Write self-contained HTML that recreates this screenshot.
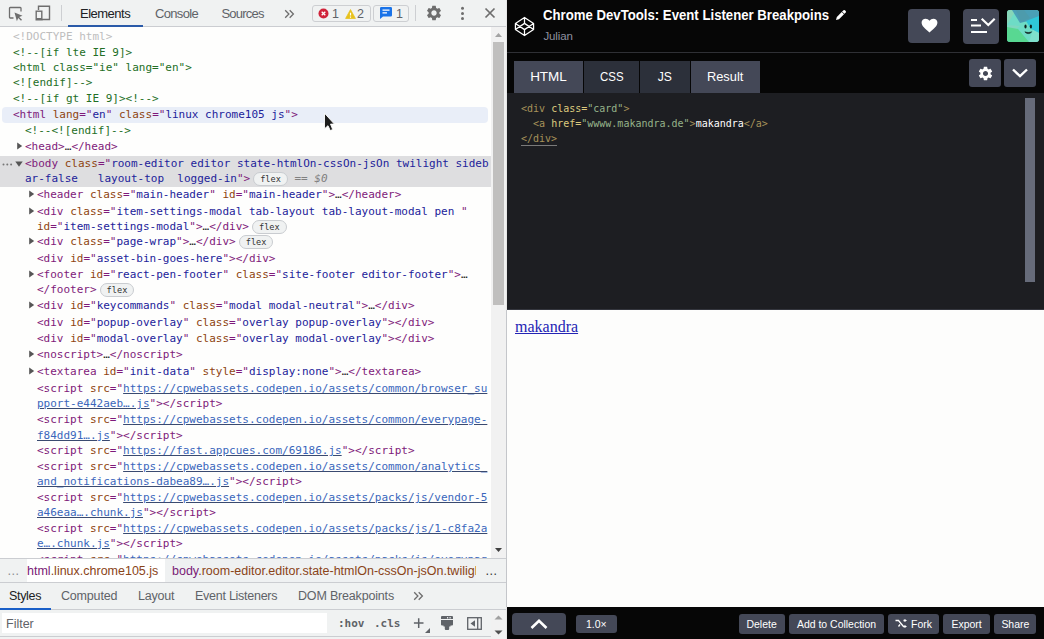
<!DOCTYPE html>
<html lang="en">
<head>
<meta charset="utf-8">
<title>Chrome DevTools: Event Listener Breakpoins</title>
<style>
*{box-sizing:border-box;margin:0;padding:0}
html,body{width:1044px;height:639px;overflow:hidden;background:#fff}
body{position:relative;font-family:"Liberation Sans",sans-serif}
.abs{position:absolute}
/* ---------- DevTools ---------- */
#dt{position:absolute;left:0;top:0;width:506px;height:639px;background:#fff;overflow:hidden;font-size:12px;color:#333}
#tb{position:absolute;left:0;top:0;width:506px;height:27px;background:#f0f2f2;border-bottom:1px solid #cbcdd1}
.tab{position:absolute;top:6px;font-size:13px;letter-spacing:-0.4px;line-height:15px;color:#5f6368;white-space:nowrap}
.tab.on{color:#202124}
#dom{position:absolute;left:0;top:27px;width:491px;height:531px;overflow:hidden;background:#fefefd}
#domin{position:absolute;left:0;top:-27px;width:491px;height:600px}
.ln{position:absolute;height:16px;line-height:16px;font-family:"DejaVu Sans Mono","Liberation Mono",monospace;font-size:11px;white-space:pre;color:#222}
.t{color:#7e1a7a}.an{color:#8e4410}.av{color:#22229a}.c{color:#236e25}.dt{color:#bdbdbd}
.lk{color:#3a66bc;text-decoration:underline;text-decoration-color:#3a4a70}
.el{color:#222}
.eq{color:#808080;font-style:italic}
.fx{display:inline-block;vertical-align:top;margin-top:1px;height:14px;line-height:12px;font-size:8.6px;border:1px solid #c9ccd0;border-radius:7px;padding:0 6px;margin-left:3px;color:#333;background:#f0f2f2;font-family:"DejaVu Sans Mono",monospace}
.ar{position:absolute;top:3px;left:-8px;width:6px;height:8px;fill:#555}
.ad{position:absolute;top:5px;left:-10px;width:8px;height:6px;fill:#555}
#sb{position:absolute;left:491px;top:27px;width:15px;height:531px;background:#f1f1f1}
#sbth{position:absolute;left:2px;top:15px;width:11px;height:263px;background:#c0bfbe}
#bc{position:absolute;left:0;top:558px;width:506px;height:25px;background:#f0f2f2;border-top:1px solid #cbcdd1;border-bottom:1px solid #cbcdd1}
#st{position:absolute;left:0;top:583px;width:506px;height:27px;background:#f0f2f2;border-bottom:1px solid #cbcdd1}
#fl{position:absolute;left:0;top:610px;width:506px;height:29px;background:#f0f2f2}
/* ---------- CodePen ---------- */
#cp{position:absolute;left:507px;top:0;width:537px;height:639px;background:#060606;overflow:hidden;font-family:"Liberation Sans",sans-serif}

.ic{position:absolute}
.badge{position:absolute;top:5px;height:17px;border:1px solid #cdcfd2;border-radius:3px;background:#f0f2f2}
.bn{position:absolute;top:7px;font-size:12.5px;line-height:15px;color:#5f6368}
.crumb{position:absolute;top:0;height:23px;line-height:24px;font-size:12.5px;white-space:nowrap;color:#8a4418;overflow:hidden}
.crumb b{font-weight:normal;color:#7a1c76}
.stab{position:absolute;top:6px;font-size:12.5px;line-height:15px;color:#5f6368;white-space:nowrap}
.stab.on{color:#202124}
.mono{font-family:"DejaVu Sans Mono","Liberation Mono",monospace}
/* codepen */
#cph{position:absolute;left:0;top:0;width:537px;height:53px;border-bottom:1px solid #2f3035}
#title{position:absolute;left:36px;top:5px;font-size:14.5px;line-height:20px;font-weight:bold;color:#fff;white-space:nowrap;transform:scaleX(.909);transform-origin:0 0}
#author{position:absolute;left:36.500px;top:29px;font-size:11.5px;letter-spacing:-0.15px;line-height:15px;color:#8f91a0;white-space:nowrap}
.hb{position:absolute;background:#444857;border-radius:4px}
.etab{position:absolute;top:61px;height:32px;line-height:32px;text-align:center;color:#fff;font-size:13.5px;background:#2c303a}
.etab span{display:inline-block}
.etab.on{background:#444857}
#ed{position:absolute;left:0;top:93px;width:537px;height:217px;background:#1d1e22;border-bottom:1px solid #34363e}
.cl{position:absolute;left:14px;height:15px;line-height:15px;font-family:"DejaVu Sans Mono","Liberation Mono",monospace;font-size:10px;white-space:pre;color:#fff}
.ct{color:#a7925a}.ca{color:#ddca7e}.cs{color:#96b38a}
#res{position:absolute;left:0;top:310px;width:537px;height:297px;background:#fdfdfc;font-family:"Liberation Serif",serif}
#res a{position:absolute;left:8px;top:8px;font-size:16px;line-height:18px;color:#2424b4;text-decoration:underline}
#cpf{position:absolute;left:0;top:607px;width:537px;height:32px;background:#060606}
.fb span{display:inline-block;transform:scaleX(.91)}
.fb{position:absolute;top:7px;height:20px;line-height:20px;background:#444857;border-radius:3px;color:#fff;font-size:11.5px;text-align:center;white-space:nowrap}
</style>
</head>
<body>
<div id="dt">
  <div id="tb">
    <svg class="ic" style="left:8px;top:6px" width="16" height="16" viewBox="0 0 16 16"><path d="M13 5.5V2.2a.7.7 0 0 0-.7-.7H2.200a.7.7 0 0 0-.7.7v9.1a.7.7 0 0 0 .7.7H5.500" fill="none" stroke="#6e6e6e" stroke-width="1.3"/><path d="M6.500 6.500l8 3.200-3.300 1.300 2.800 2.800-1 1-2.800-2.800-1.300 3.300z" fill="#6e6e6e"/></svg>
    <svg class="ic" style="left:34px;top:4px" width="18" height="18" viewBox="0 0 18 18"><path d="M4.500 6V2.300h11v13.200H8" fill="none" stroke="#6e6e6e" stroke-width="1.4"/><rect x="2.200" y="7.200" width="5.600" height="8.600" fill="none" stroke="#6e6e6e" stroke-width="1.400"/><rect x="2.200" y="14" width="5.600" height="1.800" fill="#6e6e6e"/></svg>
    <div class="abs" style="left:61px;top:5px;width:1px;height:16px;background:#cdcfd2"></div>
    <span class="tab on" style="left:80px;letter-spacing:-0.5px">Elements</span>
    <div class="abs" style="left:68px;top:25px;width:75px;height:2px;background:#2a5aa8"></div>
    <span class="tab" style="left:155px;letter-spacing:-0.67px">Console</span>
    <span class="tab" style="left:221.500px;letter-spacing:-0.8px">Sources</span>
    <svg class="ic" style="left:284px;top:8.500px" width="11" height="10" viewBox="0 0 11 10"><path d="M1.200 1.200l3.700 3.800-3.700 3.800M5.700 1.200l3.700 3.800-3.700 3.800" fill="none" stroke="#6e6e6e" stroke-width="1.300"/></svg>
    <div class="badge" style="left:312px;width:59px"></div>
    <svg class="ic" style="left:318px;top:8px" width="11" height="11" viewBox="0 0 11 11"><circle cx="5.500" cy="5.500" r="5" fill="#d0233a"/><path d="M3.700 3.700l3.600 3.600M7.300 3.700L3.700 7.300" stroke="#fff" stroke-width="1.300"/></svg>
    <span class="bn" style="left:332px">1</span>
    <svg class="ic" style="left:344.500px;top:8.500px" width="11" height="10" viewBox="0 0 12 11"><path d="M6 .6L11.400 10.400H.6z" fill="#e8c21c" stroke="#e8c21c" stroke-width=".8" stroke-linejoin="round"/><path d="M6 4v3.200M6 8.300v1.200" stroke="#fff" stroke-width="1.300"/></svg>
    <span class="bn" style="left:357px">2</span>
    <div class="badge" style="left:373px;width:36px"></div>
    <svg class="ic" style="left:380px;top:7px" width="12" height="12" viewBox="0 0 12 12"><path d="M1.200 0h9.600A1.200 1.200 0 0 1 12 1.200v7.100a1.200 1.200 0 0 1-1.200 1.200H3L0 12V1.200A1.200 1.200 0 0 1 1.200 0z" fill="#1a73e8"/><path d="M2.500 3.200h7M2.500 5.800h4.500" stroke="#fff" stroke-width="1.200"/></svg>
    <span class="bn" style="left:396px">1</span>
    <div class="abs" style="left:415px;top:5px;width:1px;height:16px;background:#cdcfd2"></div>
    <svg class="ic" style="left:425px;top:4px" width="18" height="18" viewBox="0 0 24 24"><path fill="#6e6e6e" d="M19.140 12.940c.04-.3.060-.61.060-.940 0-.32-.020-.64-.070-.94l2.030-1.580c.18-.14.230-.41.120-.61l-1.920-3.320c-.12-.22-.37-.29-.59-.22l-2.390.96c-.5-.38-1.030-.7-1.620-.94l-.36-2.540c-.04-.24-.24-.41-.48-.41h-3.840c-.24 0-.43.170-.47.410l-.36 2.540c-.59.240-1.130.57-1.620.94l-2.390-.96c-.22-.08-.47 0-.59.220L2.740 8.870c-.12.210-.08.470.12.610l2.030 1.580c-.05.300-.09.630-.09.940s.02.640.07.940l-2.030 1.580c-.18.140-.23.410-.12.610l1.920 3.320c.12.220.37.290.59.220l2.390-.96c.5.380 1.030.7 1.620.94l.36 2.540c.05.240.24.410.48.410h3.840c.24 0 .44-.17.470-.41l.36-2.540c.59-.24 1.130-.56 1.620-.94l2.390.96c.22.080.47 0 .59-.22l1.920-3.320c.12-.22.070-.47-.12-.61l-2.010-1.580zM12 15.600c-1.980 0-3.600-1.620-3.600-3.600s1.620-3.600 3.600-3.600 3.600 1.620 3.600 3.600-1.620 3.600-3.600 3.600z"/></svg>
    <svg class="ic" style="left:460px;top:6px" width="5" height="15" viewBox="0 0 5 15"><circle cx="2.500" cy="2.300" r="1.500" fill="#6e6e6e"/><circle cx="2.500" cy="7.400" r="1.500" fill="#6e6e6e"/><circle cx="2.500" cy="12.500" r="1.500" fill="#6e6e6e"/></svg>
    <svg class="ic" style="left:484px;top:7px" width="12" height="12" viewBox="0 0 12 12"><path d="M1.500 1.500l9 9M10.500 1.500l-9 9" stroke="#6e6e6e" stroke-width="1.700"/></svg>
  </div>
  <div id="dom"><div id="domin">
    <div class="abs" style="left:2px;top:107px;width:486px;height:16px;background:#e9eef8;border-radius:4px"></div>
    <div class="abs" style="left:0;top:156px;width:491px;height:31px;background:#dedee0"></div>
<svg class="abs" style="left:2px;top:163px" width="11" height="3" viewBox="0 0 11 3"><circle cx="1.500" cy="1.500" r="1" fill="#777"/><circle cx="5.300" cy="1.500" r="1" fill="#777"/><circle cx="9.100" cy="1.500" r="1" fill="#777"/></svg>
<div class="ln" style="top:29px;left:13px"><span class="dt">&lt;!DOCTYPE html&gt;</span></div>
<div class="ln" style="top:45px;left:13px"><span class="c">&lt;!--[if lte IE 9]&gt;</span></div>
<div class="ln" style="top:60px;left:13px"><span class="c">&lt;html class=&quot;ie&quot; lang=&quot;en&quot;&gt;</span></div>
<div class="ln" style="top:75px;left:13px"><span class="c">&lt;![endif]--&gt;</span></div>
<div class="ln" style="top:91px;left:13px"><span class="c">&lt;!--[if gt IE 9]&gt;&lt;!--&gt;</span></div>
<div class="ln" style="top:107px;left:13px"><span class="t">&lt;html</span> <span class="an">lang</span><span class="t">=&quot;</span><span class="av">en</span><span class="t">&quot;</span> <span class="an">class</span><span class="t">=&quot;</span><span class="av">linux chrome105 js</span><span class="t">&quot;</span><span class="t">&gt;</span></div>
<div class="ln" style="top:123px;left:25px"><span class="c">&lt;!--&lt;![endif]--&gt;</span></div>
<div class="ln" style="top:139px;left:25px"><span class="t">&lt;head&gt;</span><span class="el">…</span><span class="t">&lt;/head&gt;</span><svg class="ar" viewBox="0 0 6 8"><path d="M.2.400L5.200 4 .2 7.600z"/></svg></div>
<div class="ln" style="top:156px;left:25px"><span class="t">&lt;body</span> <span class="an">class</span><span class="t">=&quot;</span><span class="av">room-editor editor state-htmlOn-cssOn-jsOn twilight sideb</span><svg class="ad" viewBox="0 0 8 6"><path d="M.3.400h7.400L4 5.800z"/></svg></div>
<div class="ln" style="top:171px;left:25px"><span class="av">ar-false   layout-top  logged-in</span><span class="t">&quot;&gt;</span><span class="fx">flex</span><span class="eq"> == $0</span></div>
<div class="ln" style="top:187px;left:37px"><span class="t">&lt;header</span> <span class="an">class</span><span class="t">=&quot;</span><span class="av">main-header</span><span class="t">&quot;</span> <span class="an">id</span><span class="t">=&quot;</span><span class="av">main-header</span><span class="t">&quot;</span><span class="t">&gt;</span><span class="el">…</span><span class="t">&lt;/header&gt;</span><svg class="ar" viewBox="0 0 6 8"><path d="M.2.400L5.200 4 .2 7.600z"/></svg></div>
<div class="ln" style="top:204px;left:37px"><span class="t">&lt;div</span> <span class="an">class</span><span class="t">=&quot;</span><span class="av">item-settings-modal tab-layout tab-layout-modal pen </span><span class="t">&quot;</span><svg class="ar" viewBox="0 0 6 8"><path d="M.2.400L5.200 4 .2 7.600z"/></svg></div>
<div class="ln" style="top:219px;left:37px"><span class="an">id</span><span class="t">=&quot;</span><span class="av">item-settings-modal</span><span class="t">&quot;&gt;</span><span class="el">…</span><span class="t">&lt;/div&gt;</span><span class="fx">flex</span></div>
<div class="ln" style="top:234px;left:37px"><span class="t">&lt;div</span> <span class="an">class</span><span class="t">=&quot;</span><span class="av">page-wrap</span><span class="t">&quot;</span><span class="t">&gt;</span><span class="el">…</span><span class="t">&lt;/div&gt;</span><span class="fx">flex</span><svg class="ar" viewBox="0 0 6 8"><path d="M.2.400L5.200 4 .2 7.600z"/></svg></div>
<div class="ln" style="top:251px;left:37px"><span class="t">&lt;div</span> <span class="an">id</span><span class="t">=&quot;</span><span class="av">asset-bin-goes-here</span><span class="t">&quot;</span><span class="t">&gt;&lt;/div&gt;</span></div>
<div class="ln" style="top:267px;left:37px"><span class="t">&lt;footer</span> <span class="an">id</span><span class="t">=&quot;</span><span class="av">react-pen-footer</span><span class="t">&quot;</span> <span class="an">class</span><span class="t">=&quot;</span><span class="av">site-footer editor-footer</span><span class="t">&quot;</span><span class="t">&gt;</span><span class="el">…</span><svg class="ar" viewBox="0 0 6 8"><path d="M.2.400L5.200 4 .2 7.600z"/></svg></div>
<div class="ln" style="top:282px;left:37px"><span class="t">&lt;/footer&gt;</span><span class="fx">flex</span></div>
<div class="ln" style="top:298px;left:37px"><span class="t">&lt;div</span> <span class="an">id</span><span class="t">=&quot;</span><span class="av">keycommands</span><span class="t">&quot;</span> <span class="an">class</span><span class="t">=&quot;</span><span class="av">modal modal-neutral</span><span class="t">&quot;</span><span class="t">&gt;</span><span class="el">…</span><span class="t">&lt;/div&gt;</span><svg class="ar" viewBox="0 0 6 8"><path d="M.2.400L5.200 4 .2 7.600z"/></svg></div>
<div class="ln" style="top:315px;left:37px"><span class="t">&lt;div</span> <span class="an">id</span><span class="t">=&quot;</span><span class="av">popup-overlay</span><span class="t">&quot;</span> <span class="an">class</span><span class="t">=&quot;</span><span class="av">overlay popup-overlay</span><span class="t">&quot;</span><span class="t">&gt;&lt;/div&gt;</span></div>
<div class="ln" style="top:331px;left:37px"><span class="t">&lt;div</span> <span class="an">id</span><span class="t">=&quot;</span><span class="av">modal-overlay</span><span class="t">&quot;</span> <span class="an">class</span><span class="t">=&quot;</span><span class="av">overlay modal-overlay</span><span class="t">&quot;</span><span class="t">&gt;&lt;/div&gt;</span></div>
<div class="ln" style="top:347px;left:37px"><span class="t">&lt;noscript&gt;</span><span class="el">…</span><span class="t">&lt;/noscript&gt;</span><svg class="ar" viewBox="0 0 6 8"><path d="M.2.400L5.200 4 .2 7.600z"/></svg></div>
<div class="ln" style="top:364px;left:37px"><span class="t">&lt;textarea</span> <span class="an">id</span><span class="t">=&quot;</span><span class="av">init-data</span><span class="t">&quot;</span> <span class="an">style</span><span class="t">=&quot;</span><span class="av">display:none</span><span class="t">&quot;</span><span class="t">&gt;</span><span class="el">…</span><span class="t">&lt;/textarea&gt;</span><svg class="ar" viewBox="0 0 6 8"><path d="M.2.400L5.200 4 .2 7.600z"/></svg></div>
<div class="ln" style="top:381px;left:37px"><span class="t">&lt;script</span> <span class="an">src</span><span class="t">=&quot;</span><span class="av lk">https://cpwebassets.codepen.io/assets/common/browser_su</span></div>
<div class="ln" style="top:396px;left:37px"><span class="av lk">pport-e442aeb….js</span><span class="t">&quot;&gt;&lt;/script&gt;</span></div>
<div class="ln" style="top:412px;left:37px"><span class="t">&lt;script</span> <span class="an">src</span><span class="t">=&quot;</span><span class="av lk">https://cpwebassets.codepen.io/assets/common/everypage-</span></div>
<div class="ln" style="top:428px;left:37px"><span class="av lk">f84dd91….js</span><span class="t">&quot;&gt;&lt;/script&gt;</span></div>
<div class="ln" style="top:443px;left:37px"><span class="t">&lt;script</span> <span class="an">src</span><span class="t">=&quot;</span><span class="av lk">https://fast.appcues.com/69186.js</span><span class="t">&quot;&gt;&lt;/script&gt;</span></div>
<div class="ln" style="top:459px;left:37px"><span class="t">&lt;script</span> <span class="an">src</span><span class="t">=&quot;</span><span class="av lk">https://cpwebassets.codepen.io/assets/common/analytics_</span></div>
<div class="ln" style="top:474px;left:37px"><span class="av lk">and_notifications-dabea89….js</span><span class="t">&quot;&gt;&lt;/script&gt;</span></div>
<div class="ln" style="top:490px;left:37px"><span class="t">&lt;script</span> <span class="an">src</span><span class="t">=&quot;</span><span class="av lk">https://cpwebassets.codepen.io/assets/packs/js/vendor-5</span></div>
<div class="ln" style="top:505px;left:37px"><span class="av lk">a46eaa….chunk.js</span><span class="t">&quot;&gt;&lt;/script&gt;</span></div>
<div class="ln" style="top:521px;left:37px"><span class="t">&lt;script</span> <span class="an">src</span><span class="t">=&quot;</span><span class="av lk">https://cpwebassets.codepen.io/assets/packs/js/1-c8fa2a</span></div>
<div class="ln" style="top:536px;left:37px"><span class="av lk">e….chunk.js</span><span class="t">&quot;&gt;&lt;/script&gt;</span></div>
<div class="ln" style="top:552px;left:37px"><span class="t">&lt;script</span> <span class="an">src</span><span class="t">=&quot;</span><span class="av lk">https://cpwebassets.codepen.io/assets/packs/js/everypag</span></div>
  </div></div>
  <div id="sb"><div id="sbth"></div><svg class="ic" style="left:4px;top:6px" width="7" height="4" viewBox="0 0 7 4"><path d="M0 4L3.500 0 7 4z" fill="#a3a3a3"/></svg><svg class="ic" style="left:4px;top:521px" width="7" height="4" viewBox="0 0 7 4"><path d="M0 0L3.500 4 7 0z" fill="#404040"/></svg></div>
  <div id="bc">
    <span class="crumb" style="left:7px;color:#8a8d91">…</span>
    <span class="crumb" style="left:27px;width:138px;background:#fff;padding-left:0"><b>html</b>.linux.chrome105.js</span>
    <span class="crumb" style="left:165px;width:310.500px;background:#eff1f2;padding-left:7px"><b>body</b>.room-editor.editor.state-htmlOn-cssOn-jsOn.twilight.sidebar-false</span>
    <span class="crumb" style="left:485px;color:#333">…</span>
  </div>
  <div id="st">
    <span class="stab on" style="left:9px;letter-spacing:-0.33px">Styles</span>
    <div class="abs" style="left:0;top:25px;width:51px;height:2px;background:#1a5fc8"></div>
    <span class="stab" style="left:61px;letter-spacing:-0.18px">Computed</span>
    <span class="stab" style="left:138px;letter-spacing:-0.2px">Layout</span>
    <span class="stab" style="left:195px;letter-spacing:-0.26px">Event Listeners</span>
    <span class="stab" style="left:298px;letter-spacing:-0.18px">DOM Breakpoints</span>
    <svg class="ic" style="left:413px;top:8px" width="11" height="10" viewBox="0 0 11 10"><path d="M1.200 1.200l3.700 3.800-3.700 3.800M5.700 1.200l3.700 3.800-3.700 3.800" fill="none" stroke="#6e6e6e" stroke-width="1.300"/></svg>
  </div>
  <div id="fl">
    <div class="abs" style="left:2px;top:3px;width:325px;height:20px;background:#fff"></div><div class="abs" style="left:0;top:26px;width:491px;height:1px;background:#cbcdd1"></div>
    <span class="abs" style="left:6px;top:7px;font-size:12.5px;line-height:15px;color:#5f6368">Filter</span>
    <span class="abs mono" style="left:338px;top:6px;font-size:11px;line-height:15px;font-weight:bold;color:#5f6368">:hov</span>
    <span class="abs mono" style="left:374px;top:6px;font-size:11px;line-height:15px;font-weight:bold;color:#5f6368">.cls</span>
    <svg class="ic" style="left:412px;top:6px" width="19" height="18" viewBox="0 0 19 18"><path d="M6.700 2.300v9.600M1.900 7.100h9.600" stroke="#5f6368" stroke-width="1.500"/><path d="M18 12v5h-5z" fill="#5f6368"/></svg>
    <svg class="ic" style="left:441px;top:6px" width="12" height="14" viewBox="0 0 12 14"><path d="M1 0h10a1 1 0 0 1 1 1v2H0V1a1 1 0 0 1 1-1zM0 4h12v4.500a1 1 0 0 1-1 1H1a1 1 0 0 1-1-1zM2.500 9.500h7v1h-7zM3.800 10.500h4.400v2.500a1 1 0 0 1-1 1H4.800a1 1 0 0 1-1-1z" fill="#5f6368"/><path d="M6 1h1.200v1.500H6zM8.500 1h1.200v1.500H8.500z" fill="#e8eaed"/></svg>
    <svg class="ic" style="left:467px;top:7px" width="15" height="13" viewBox="0 0 15 13"><rect x=".7" y=".7" width="13.600" height="11.600" fill="none" stroke="#5f6368" stroke-width="1.300"/><path d="M10.700 1v11" stroke="#5f6368" stroke-width="1.300"/><path d="M8 3.300v6.400L3.500 6.500z" fill="#5f6368"/></svg>
    <div class="abs" style="left:491px;top:0;width:15px;height:30px;background:#f1f1f1"></div>
    <svg class="ic" style="left:494px;top:4px" width="9" height="22" viewBox="0 0 9 22"><path d="M.5 5.500L4.500 1.500l4 4z" fill="#a0a0a0"/><path d="M.5 16.500l4 4 4-4z" fill="#505050"/></svg>
  </div>
</div>
<div class="abs" style="left:506px;top:0;width:1px;height:639px;background:#e6e6e6"></div><div class="abs" style="left:506px;top:310px;width:1px;height:297px;background:#c4c6ca"></div>
<div id="cp">
  <div id="cph">
    <svg class="ic" style="left:7.300px;top:15.900px" width="21" height="21" viewBox="0 0 22 22"><path d="M11 1.500L20.500 7.800v6.400L11 20.500 1.500 14.200V7.800zM11 1.500v6.200M11 14.300v6.200M1.500 7.800L11 14.300l9.500-6.500M1.500 14.200L11 7.700l9.500 6.500" fill="none" stroke="#fff" stroke-width="1.350" stroke-linejoin="round"/></svg>
    <span id="title">Chrome DevTools: Event Listener Breakpoins</span>
    <svg class="ic" style="left:328px;top:9px" width="12" height="12" viewBox="0 0 12 12"><path d="M1 11l.8-3L8.500 1.300a1 1 0 0 1 1.400 0l.8.800a1 1 0 0 1 0 1.400L4 10.200z" fill="#fff"/><path d="M7 2.800L9.200 5" stroke="#060606" stroke-width=".8"/></svg>
    <span id="author">Julian</span>
    <div class="hb" style="left:401px;top:9px;width:42px;height:34px"></div>
    <svg class="ic" style="left:414px;top:18px" width="17" height="15" viewBox="0 0 17 15"><path d="M8.500 14.500C4 10.800.6 8 .6 4.600.6 2.300 2.400.7 4.600.7c1.500 0 3 .8 3.900 2.100C9.400 1.500 10.900.7 12.400.7c2.200 0 4 1.600 4 3.900 0 3.400-3.400 6.200-7.900 9.900z" fill="#fff"/></svg>
    <div class="hb" style="left:456px;top:9px;width:36px;height:35px"></div>
    <svg class="ic" style="left:463px;top:16px" width="26" height="20" viewBox="0 0 26 20"><path d="M1 4h6M1 9.500h10M1 16h16" stroke="#fff" stroke-width="2"/><path d="M11.700 2.800l6.600 6.200 6.400-6.200" fill="none" stroke="#fff" stroke-width="2.200"/></svg>
    <svg class="ic" style="left:500px;top:10px" width="32" height="32" viewBox="0 0 32 32"><defs><clipPath id="ac"><rect width="32" height="32" rx="3"/></clipPath></defs><g clip-path="url(#ac)"><rect width="32" height="32" fill="#6edcc6"/><path d="M0 0h9L0 15z" fill="#86d6b8"/><path d="M5 0h27v7L21 11 13 13z" fill="#4a9fb6"/><path d="M9 0h8l6 8-9 4z" fill="#4f9aa8" opacity=".7"/><path d="M32 6v17l-8-4-5-8z" fill="#2fc6d8"/><path d="M0 15l13 1-6 5-7 0z" fill="#7fd8c0"/><path d="M0 17l11 2 11 13H0z" fill="#58d892"/><path d="M22 32l4-12 6 3v9z" fill="#7fe0cc"/></g><ellipse cx="18.500" cy="16.400" rx="1.100" ry="2" fill="#10201e"/><ellipse cx="23.900" cy="16.400" rx="1.100" ry="2" fill="#10201e"/><path d="M17.900 21.800c1.300 2.400 5.500 2.400 6.800 0-2 .9-4.800.9-6.800 0z" fill="#10201e" stroke="#10201e" stroke-width=".6" stroke-linejoin="round"/></svg>
  </div>
  <div class="etab on" style="left:7px;width:69px"><span>HTML</span></div>
  <div class="etab" style="left:77px;width:55px"><span style="transform:scaleX(.85)">CSS</span></div>
  <div class="etab" style="left:133px;width:50px"><span style="transform:scaleX(.9)">JS</span></div>
  <div class="etab on" style="left:184px;width:69px"><span style="transform:scaleX(.95)">Result</span></div>
  <div class="hb" style="left:462px;top:59px;width:32px;height:28px;border-radius:3px"></div>
  <svg class="ic" style="left:469.500px;top:64.500px" width="17" height="17" viewBox="0 0 24 24"><path fill="#fff" d="M19.140 12.940c.04-.3.060-.61.060-.940 0-.32-.020-.64-.070-.94l2.030-1.580c.18-.14.230-.41.120-.61l-1.920-3.320c-.12-.22-.37-.29-.59-.22l-2.390.96c-.5-.38-1.030-.7-1.620-.94l-.36-2.540c-.04-.24-.24-.41-.48-.41h-3.840c-.24 0-.43.170-.47.410l-.36 2.540c-.59.240-1.130.57-1.620.94l-2.390-.96c-.22-.08-.47 0-.59.220L2.740 8.870c-.12.210-.08.470.12.610l2.030 1.580c-.05.300-.09.630-.09.940s.02.640.07.940l-2.030 1.580c-.18.140-.23.410-.12.610l1.920 3.320c.12.220.37.290.59.220l2.390-.96c.5.380 1.030.7 1.620.94l.36 2.540c.05.240.24.410.48.410h3.840c.24 0 .44-.17.470-.41l.36-2.540c.59-.24 1.130-.56 1.620-.94l2.390.96c.22.080.47 0 .59-.22l1.920-3.320c.12-.22.070-.47-.12-.61l-2.010-1.580zM12 15.600c-1.980 0-3.600-1.620-3.600-3.600s1.620-3.600 3.600-3.600 3.600 1.620 3.600 3.600-1.620 3.600-3.600 3.600z"/></svg>
  <div class="hb" style="left:497px;top:59px;width:32px;height:28px;border-radius:3px"></div>
  <svg class="ic" style="left:504px;top:67px" width="18" height="12" viewBox="0 0 18 12"><path d="M2 2.500l7 6.700 7-6.700" fill="none" stroke="#fff" stroke-width="2.400"/></svg>
  <div id="ed">
    <div class="cl" style="top:8px"><span class="ct">&lt;div</span> <span class="ca">class=</span><span class="cs">"card"</span><span class="ct">&gt;</span></div>
    <div class="cl" style="top:23px">  <span class="ct">&lt;a</span> <span class="ca">href=</span><span class="cs">"wwww.makandra.de"</span><span class="ct">&gt;</span>makandra<span class="ct">&lt;/a&gt;</span></div>
    <div class="cl" style="top:38px"><span class="ct" style="border-bottom:1px solid #7a7a7a;padding-bottom:1px">&lt;/div&gt;</span></div>
    <div class="abs" style="left:518px;top:5px;width:10px;height:184px;background:#666b7a"></div>
  </div>
  <div id="res"><a>makandra</a></div>
  <div id="cpf">
    <div class="fb" style="left:5px;top:6px;width:54px;height:22px;border-radius:4px"></div>
    <svg class="ic" style="left:22px;top:11px" width="20" height="12" viewBox="0 0 20 12"><path d="M2.500 10L10 2.800 17.500 10" fill="none" stroke="#fff" stroke-width="2.600"/></svg>
    <div class="fb" style="left:69px;top:8px;width:41px;height:18px;line-height:18px"><span>1.0×</span></div>
    <div class="fb" style="left:232px;width:46px"><span>Delete</span></div>
    <div class="fb" style="left:282px;width:95px"><span>Add to Collection</span></div>
    <div class="fb" style="left:381px;width:51px;padding-left:15px"><span>Fork</span></div>
    <svg class="ic" style="left:388px;top:12px" width="12" height="10" viewBox="0 0 12 10"><path d="M.5 1.500h3l5 6h2M8.500 1.500h2M5 5.500l-1.500 2" fill="none" stroke="#fff" stroke-width="1.300"/><path d="M9.500 0l2.500 1.500L9.500 3zM9.500 6l2.500 1.500L9.500 9z" fill="#fff"/></svg>
    <div class="fb" style="left:436px;width:47px"><span>Export</span></div>
    <div class="fb" style="left:487px;width:42px"><span>Share</span></div>
  </div>
</div>
<svg class="ic" style="left:323.200px;top:112.200px" width="16" height="22" viewBox="0 0 16 22"><path d="M1.500 1.200V16.800L5 13.700l2.300 4.900 2.400-1.100L7.500 12.100H11.400z" fill="#1c1c1c" stroke="#fff" stroke-width=".9" stroke-linejoin="round"/></svg>
</body>
</html>
